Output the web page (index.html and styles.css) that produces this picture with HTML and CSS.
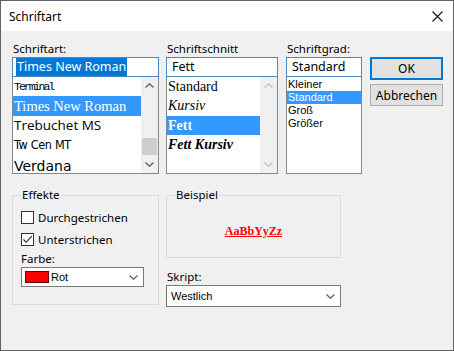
FILE: index.html
```html
<!DOCTYPE html>
<html lang="de">

<head>
    <meta charset="utf-8" />
    <title>Schriftart</title>
    <link rel="stylesheet" href="styles.css">
</head>

<body>
    <div class="window">
        <div class="titlebar">
            <span class="title">Schriftart</span>
            <svg class="close" width="11" height="11" viewBox="0 0 11 11">
                <path d="M0.5 0.5 L10.5 10.5 M10.5 0.5 L0.5 10.5" stroke="#111" stroke-width="1.1" fill="none" />
            </svg>
        </div>

        <div class="dialog">
            <div class="top">
                <div class="col col-font">
                    <span class="label">Schriftart:</span>
                    <div class="input"><span class="sel">Times New Roman</span></div>
                    <div class="list">
                        <ul class="items">
                            <li class="f-terminal r19">Terminal</li>
                            <li class="f-times r20 selected">Times New Roman</li>
                            <li class="f-trebuchet r19">Trebuchet MS</li>
                            <li class="f-twcen r20">Tw Cen MT</li>
                            <li class="f-verdana r20">Verdana</li>
                        </ul>
                        <div class="scrollbar">
                            <span class="arrow"><svg width="9" height="5" viewBox="0 0 9 5"><path d="M0.5 4.5 L4.5 0.8 L8.5 4.5" /></svg></span>
                            <span class="track"><span class="thumb"></span></span>
                            <span class="arrow"><svg width="9" height="5" viewBox="0 0 9 5"><path d="M0.5 0.5 L4.5 4.2 L8.5 0.5" /></svg></span>
                        </div>
                    </div>
                </div>

                <div class="col col-style">
                    <span class="label">Schriftschnitt</span>
                    <div class="input">Fett</div>
                    <div class="list">
                        <ul class="items serif">
                            <li class="r19">Standard</li>
                            <li class="r20 italic">Kursiv</li>
                            <li class="r19 bold selected">Fett</li>
                            <li class="r20 bold italic">Fett Kursiv</li>
                        </ul>
                        <div class="scrollbar disabled">
                            <span class="arrow"><svg width="9" height="5" viewBox="0 0 9 5"><path d="M0.5 4.5 L4.5 0.8 L8.5 4.5" /></svg></span>
                            <span class="track"></span>
                            <span class="arrow"><svg width="9" height="5" viewBox="0 0 9 5"><path d="M0.5 0.5 L4.5 4.2 L8.5 0.5" /></svg></span>
                        </div>
                    </div>
                </div>

                <div class="col col-size">
                    <span class="label">Schriftgrad:</span>
                    <div class="input">Standard</div>
                    <div class="list">
                        <ul class="items small">
                            <li>Kleiner</li>
                            <li class="selected">Standard</li>
                            <li>Groß</li>
                            <li>Größer</li>
                        </ul>
                    </div>
                </div>

                <div class="buttons">
                    <button class="btn default">OK</button>
                    <button class="btn">Abbrechen</button>
                </div>
            </div>

            <div class="bottom">
                <fieldset class="group effects">
                    <legend>Effekte</legend>
                    <div class="check">
                        <span class="box"></span>
                        <span>Durchgestrichen</span>
                    </div>
                    <div class="check">
                        <span class="box">
                            <svg width="11" height="11" viewBox="0 0 11 11"><path d="M1.5 5.5 L4.2 8.3 L9.8 2.2" /></svg>
                        </span>
                        <span>Unterstrichen</span>
                    </div>
                    <span class="label">Farbe:</span>
                    <div class="combo color-combo">
                        <span class="swatch"></span>
                        <span>Rot</span>
                        <svg class="chev" width="9" height="5" viewBox="0 0 9 5"><path d="M0.5 0.5 L4.5 4.2 L8.5 0.5" /></svg>
                    </div>
                </fieldset>

                <div class="col-sample">
                    <fieldset class="group sample">
                        <legend>Beispiel</legend>
                        <div class="sample-text">AaBbYyZz</div>
                    </fieldset>
                    <span class="label">Skript:</span>
                    <div class="combo script-combo">
                        <span>Westlich</span>
                        <svg class="chev" width="9" height="5" viewBox="0 0 9 5"><path d="M0.5 0.5 L4.5 4.2 L8.5 0.5" /></svg>
                    </div>
                </div>
            </div>
        </div>
    </div>
</body>

</html>
```

FILE: styles.css
```css
* {
    box-sizing: border-box;
}

body {
    margin: 0;
    background: #f0f0f0;
    font-family: "Noto Sans", "Open Sans", sans-serif;
    font-size: 11.5px;
    color: #000;
}

.window {
    width: 454px;
    height: 351px;
    border: 1px solid #626262;
    background: #f0f0f0;
}

.titlebar {
    height: 30px;
    background: #fff;
    display: flex;
    align-items: center;
    justify-content: space-between;
    padding: 0 10px 0 8px;
}

.title {
    font-size: 12px;
}

.dialog {
    padding: 10px 0 0 11px;
}

.top {
    display: flex;
}

.label {
    display: block;
    height: 16px;
    line-height: 16px;
    padding-left: 1px;
}

.col-font {
    width: 147px;
}

.col-style {
    width: 112px;
    margin-left: 7px;
}

.col-size {
    width: 76px;
    margin-left: 8px;
}

.input {
    height: 20px;
    border: 1px solid #4a86c0;
    background: #fff;
    font-size: 12.5px;
    line-height: 18px;
    padding-left: 5px;
    white-space: nowrap;
    overflow: hidden;
}

.col-font .input {
    padding-left: 3px;
}

.sel {
    background: #0078d7;
    color: #fff;
    padding: 1px 1px;
}

.list {
    height: 97px;
    border: 1px solid #828790;
    border-top: none;
    background: #fff;
    display: flex;
    overflow: hidden;
}

.items {
    list-style: none;
    margin: 0;
    padding: 0;
    flex: 1;
    min-width: 0;
}

.items li {
    padding-left: 1px;
    white-space: nowrap;
    overflow: hidden;
}

.items .selected {
    background: #3399ff;
    color: #fff;
}

.r19 {
    height: 19px;
    line-height: 19px;
}

.r20 {
    height: 20px;
    line-height: 20px;
}

.f-terminal {
    font-family: "Liberation Mono", monospace;
    font-size: 11.5px;
    letter-spacing: -2px;
}

.f-times {
    font-family: "Liberation Serif", serif;
    font-size: 14.5px;
}

.f-trebuchet {
    font-family: "Open Sans", sans-serif;
    font-size: 13.5px;
}

.f-twcen {
    font-family: "DejaVu Sans", sans-serif;
    font-stretch: condensed;
    font-size: 12.5px;
    letter-spacing: -0.3px;
}

.f-verdana {
    font-family: "DejaVu Sans", sans-serif;
    font-size: 14px;
    line-height: 22px !important;
}

.serif {
    font-family: "Liberation Serif", serif;
    font-size: 14px;
}

.italic {
    font-style: italic;
}

.bold {
    font-weight: bold;
}

.small {
    padding-top: 1px;
    font-family: "Liberation Sans", sans-serif;
    font-size: 11px;
}

.small li {
    height: 13px;
    line-height: 13px;
}

.scrollbar {
    width: 17px;
    background: #f0f0f0;
    display: flex;
    flex-direction: column;
}

.arrow {
    height: 17px;
    display: flex;
    align-items: center;
    justify-content: center;
}

.arrow svg path,
.chev path {
    fill: none;
    stroke: #606060;
    stroke-width: 1.3;
}

.disabled .arrow svg path {
    stroke: #c0c0c0;
}

.track {
    flex: 1;
    display: flex;
    flex-direction: column;
    justify-content: flex-end;
    padding: 0 1px 1px;
}

.thumb {
    height: 17px;
    background: #cdcdcd;
}

.buttons {
    width: 73px;
    margin-left: 8px;
    padding-top: 16px;
    display: flex;
    flex-direction: column;
    gap: 4px;
}

.btn {
    height: 22px;
    border: 1px solid #adadad;
    background: #e1e1e1;
    font-family: inherit;
    font-size: 12px;
    color: #000;
    padding: 0;
}

.btn.default {
    height: 23px;
    border: 2px solid #0078d7;
}

.bottom {
    display: flex;
    margin-top: 13px;
}

.group {
    margin: 0;
    border: 1px solid #dcdcdc;
    padding: 0 8px;
}

.group legend {
    padding: 0 1px;
    height: 16px;
    line-height: 16px;
}

.effects {
    width: 147px;
    height: 118px;
}

.check {
    height: 21px;
    display: flex;
    align-items: center;
    gap: 4px;
    margin-top: 1px;
}

.check:first-of-type {
    margin-top: 4px;
}

.box {
    width: 13px;
    height: 13px;
    border: 1px solid #333;
    background: #fff;
    display: flex;
    align-items: center;
    justify-content: center;
}

.box path {
    fill: none;
    stroke: #222;
    stroke-width: 1.1;
}

.effects .label {
    margin-top: 1px;
    padding-left: 0;
}

.combo {
    height: 20px;
    border: 1px solid #7a7a7a;
    background: #fff;
    display: flex;
    align-items: center;
    font-family: "Liberation Sans", sans-serif;
    font-size: 11px;
    padding: 0 5px 0 3px;
}

.chev {
    margin-left: auto;
}

.color-combo {
    width: 123px;
    margin-top: 0;
}

.swatch {
    width: 24px;
    height: 12px;
    background: #ff0000;
    border: 1px solid #6a0000;
    margin-right: 2px;
}

.col-sample {
    width: 175px;
    margin-left: 7px;
}

.sample {
    height: 71px;
}

.sample-text {
    height: 54px;
    display: flex;
    align-items: center;
    justify-content: center;
    padding-top: 2px;
    font-family: "Liberation Serif", serif;
    font-weight: bold;
    font-size: 12px;
    color: #f00;
    text-decoration: underline;
}

.col-sample .label {
    margin-top: 11px;
}

.script-combo {
    height: 22px;
    padding-left: 4px;
}
```
